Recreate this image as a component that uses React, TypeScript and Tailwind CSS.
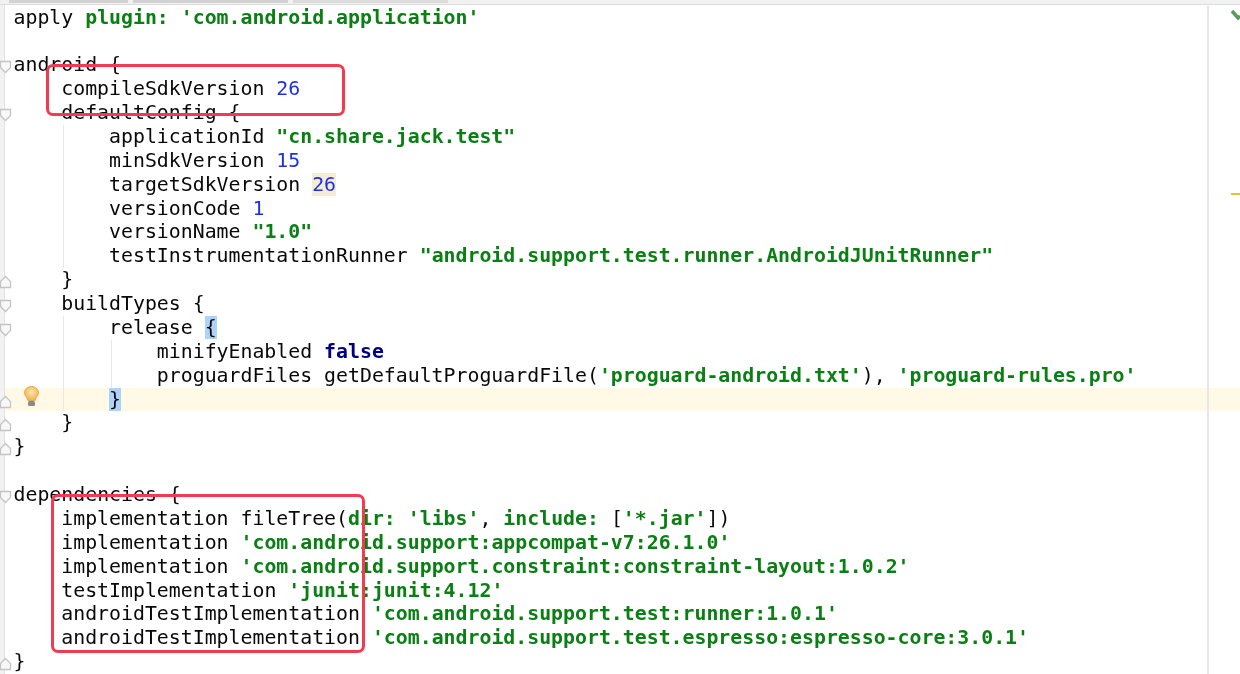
const K = 'font-bold text-[#000080]';
const S = 'font-bold text-[#0a7f14]';
const N = 'text-[#1f30e0]';
const BRACE = 'bg-[#aed3fb]';

type Tok = [string, string?];
type Line = { t: Tok[]; indent?: number; fold?: 'open' | 'close'; caret?: boolean };

const lines: Line[] = [
  { t: [['apply '], ['plugin:', S], [' '], ["'com.android.application'", S]] },
  { t: [] },
  { t: [['android {']], fold: 'open' },
  { indent: 1, t: [['compileSdkVersion '], ['26', N]] },
  { indent: 1, t: [['defaultConfig {']], fold: 'open' },
  { indent: 2, t: [['applicationId '], ['"cn.share.jack.test"', S]] },
  { indent: 2, t: [['minSdkVersion '], ['15', N]] },
  { indent: 2, t: [['targetSdkVersion '], ['26', `${N} bg-[#f5edd3]`]] },
  { indent: 2, t: [['versionCode '], ['1', N]] },
  { indent: 2, t: [['versionName '], ['"1.0"', S]] },
  { indent: 2, t: [['testInstrumentationRunner '], ['"android.support.test.runner.AndroidJUnitRunner"', S]] },
  { indent: 1, t: [['}']], fold: 'close' },
  { indent: 1, t: [['buildTypes {']], fold: 'open' },
  { indent: 2, t: [['release '], ['{', BRACE]], fold: 'open' },
  { indent: 3, t: [['minifyEnabled '], ['false', K]] },
  {
    indent: 3,
    t: [
      ['proguardFiles getDefaultProguardFile('],
      ["'proguard-android.txt'", S],
      ['), '],
      ["'proguard-rules.pro'", S],
    ],
  },
  { indent: 2, t: [['}', BRACE]], fold: 'close', caret: true },
  { indent: 1, t: [['}']], fold: 'close' },
  { t: [['}']], fold: 'close' },
  { t: [] },
  { t: [['dependencies {']], fold: 'open' },
  {
    indent: 1,
    t: [
      ['implementation fileTree('],
      ['dir:', S],
      [' '],
      ["'libs'", S],
      [', '],
      ['include:', S],
      [' ['],
      ["'*.jar'", S],
      ['])'],
    ],
  },
  { indent: 1, t: [['implementation '], ["'com.android.support:appcompat-v7:26.1.0'", S]] },
  { indent: 1, t: [['implementation '], ["'com.android.support.constraint:constraint-layout:1.0.2'", S]] },
  { indent: 1, t: [['testImplementation '], ["'junit:junit:4.12'", S]] },
  { indent: 1, t: [['androidTestImplementation '], ["'com.android.support.test:runner:1.0.1'", S]] },
  { indent: 1, t: [['androidTestImplementation '], ["'com.android.support.test.espresso:espresso-core:3.0.1'", S]] },
  { t: [['}']], fold: 'close' },
];

function FoldMark({ type }: { type: 'open' | 'close' }) {
  return (
    <svg width="12" height="14" viewBox="0 0 12 14" className="-ml-[5px] mt-[7px] shrink-0">
      <path
        d={type === 'open' ? 'M0.5 1.5H10.5V7.5L5.5 12.500L0.5 7.5Z' : 'M0.5 12.5H10.5V6.5L5.5 1.500L0.5 6.5Z'}
        fill="#f8f8f8"
        stroke="#c4c4c4"
        strokeWidth="1.3"
      />
    </svg>
  );
}

function Bulb() {
  return (
    <svg width="15" height="21" viewBox="0 0 15 21" className="absolute left-[19px] top-[-2px]">
      <defs>
        <radialGradient id="bulb" cx="50%" cy="40%" r="60%">
          <stop offset="0%" stopColor="#fbe7a8" />
          <stop offset="100%" stopColor="#f0b050" />
        </radialGradient>
      </defs>
      <path d="M7.500 0.500C3.500 0.500 0.500 3.300 0.500 6.800C0.500 9.800 3.500 11.500 4 14.500H11C11.500 11.500 14.500 9.800 14.500 6.800C14.500 3.300 11.500 0.500 7.500 0.500Z" fill="url(#bulb)" stroke="#e6a94a" />
      <rect x="4" y="15" width="7" height="5" rx="1.500" fill="#8a8a8a" />
    </svg>
  );
}

// one indent level, with the vertical guide from level two on
function Indent({ guide }: { guide: boolean }) {
  return (
    <span className="flex h-full w-[4ch] shrink-0">
      {guide && <span className="ml-[1.5px] h-full w-px bg-[#e8e8e8]" />}
    </span>
  );
}

export default function App() {
  return (
    <div className="relative flex h-[674px] w-[1240px] flex-col overflow-hidden bg-white font-['DejaVu_Sans_Mono',monospace] text-[19.85px] text-[#080808] blur-[0.3px]">
      {/* tab strip cut off at the top */}
      <div className="flex h-[5px] shrink-0 gap-[5px] border-b border-[#dcdcdc] bg-[#f1f1f1]">
        <div className="ml-[9px] h-[3px] w-[119px] bg-[#d2d2d2]" />
        <div className="h-[3px] w-[155px] bg-[#d2d2d2]" />
        <div className="h-[3px] w-[155px] bg-[#dcdcdc]" />
      </div>

      <div className="flex min-h-0 flex-1">
        {/* gutter */}
        <div className="w-[5px] shrink-0 border-r border-[#e2e2e2] bg-[#f2f2f2]" />

        <div className="min-w-0 flex-1 pt-[0.6px]">
          {lines.map((line, i) => (
            <div key={i} className={`relative flex h-[23.89px] ${line.caret ? 'bg-[#fff9e6]' : ''}`}>
              <div className="flex w-[8.5px] shrink-0">{line.fold && <FoldMark type={line.fold} />}</div>
              {line.caret && <Bulb />}
              <div className="flex min-w-0 flex-1 whitespace-pre leading-[23.89px]">
                {Array.from({ length: line.indent ?? 0 }, (_, n) => (
                  <Indent key={n} guide={n > 0} />
                ))}
                <span>
                  {line.t.map(([text, cls], j) => (
                    <span key={j} className={cls}>
                      {text}
                    </span>
                  ))}
                </span>
              </div>
              {/* right margin column */}
              <div className="relative w-[33px] shrink-0 border-l-2 border-[#e6e6e6]">
                {i === 7 && <div className="absolute left-[22px] top-[20px] h-[2px] w-[9px] bg-[#eebc3c]" />}
              </div>
            </div>
          ))}
        </div>
      </div>

      {/* green check of the inspection widget */}
      <svg width="10" height="14" viewBox="0 0 10 14" className="absolute right-0 top-[8px]">
        <path d="M2 3L8 10L10 8" stroke="#5a9a5a" strokeWidth="3.500" fill="none" />
      </svg>

      {/* red annotation boxes */}
      <div className="absolute left-[46px] top-[64px] h-[52px] w-[299px] rounded-[7px] border-[3px] border-[#f23b50]" />
      <div className="absolute left-[51px] top-[494px] h-[159px] w-[314px] rounded-[7px] border-[3px] border-[#f23b50]" />
    </div>
  );
}
